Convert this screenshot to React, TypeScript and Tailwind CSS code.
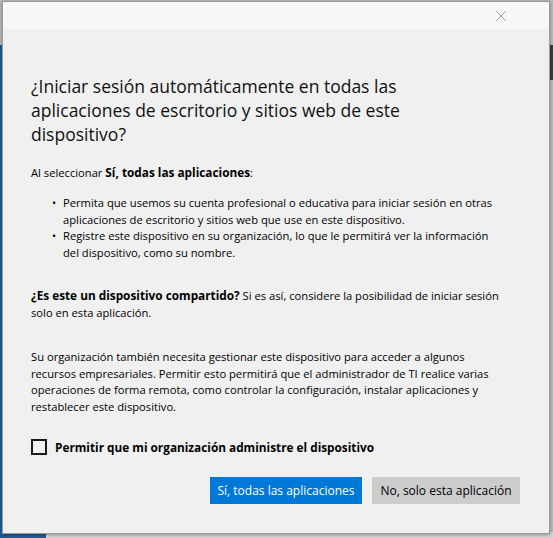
const titleLines = [
  "¿Iniciar sesión automáticamente en todas las",
  "aplicaciones de escritorio y sitios web de este",
  "dispositivo?",
];

const bullets = [
  [
    "Permita que usemos su cuenta profesional o educativa para iniciar sesión en otras",
    "aplicaciones de escritorio y sitios web que use en este dispositivo.",
  ],
  [
    "Registre este dispositivo en su organización, lo que le permitirá ver la información",
    "del dispositivo, como su nombre.",
  ],
];

const manageLines = [
  "Su organización también necesita gestionar este dispositivo para acceder a algunos",
  "recursos empresariales. Permitir esto permitirá que el administrador de TI realice varias",
  "operaciones de forma remota, como controlar la configuración, instalar aplicaciones y",
  "restablecer este dispositivo.",
];

function CloseIcon() {
  return (
    <svg width="10" height="10" viewBox="0 0 10 10" fill="none">
      <path d="M0.5 0.5L9.5 9.5M9.5 0.5L0.5 9.5" stroke="#999999" strokeWidth="1" />
    </svg>
  );
}

export default function App() {
  return (
    <div className="relative w-[553px] h-[538px] overflow-hidden bg-[#b9b9b9] font-['Open_Sans',sans-serif] text-black">
      {/* desktop behind the dialog */}
      <div className="absolute left-0 top-[45px] w-[46px] h-[493px] bg-[#1b5c9b]" />
      <div className="absolute right-0 top-[45px] w-[6px] h-[35px] bg-[#3b3b3b]" />
      <div className="absolute left-[46px] bottom-0 w-[507px] h-[6px] bg-[#d6d6d6]" />

      <div className="absolute left-[2px] top-[1px] w-[548px] h-[533px] flex flex-col border border-[#9c9c9c] bg-[#f0f0f0] shadow-[0_1px_3px_rgba(0,0,0,0.35)]">
        <div className="h-[27px] shrink-0 bg-[#f8f8f8] flex items-center justify-end pr-[43px]">
          <CloseIcon />
        </div>

        <div className="flex flex-col pl-[28px] pt-[45px]">
          <h1 className="text-[17.5px] leading-[24px] font-normal text-[#111]">
            {titleLines.map((line) => (
              <div key={line} className="whitespace-nowrap">
                {line}
              </div>
            ))}
          </h1>

          <p className="mt-[18px] text-[11.2px] leading-[17px] whitespace-nowrap">
            Al seleccionar <span className="font-bold text-[11.8px]">Sí, todas las aplicaciones</span>:
          </p>

          <ul className="mt-[14px] flex flex-col text-[11.2px] leading-[16.5px]">
            {bullets.map((item) => (
              <li key={item[0]} className="flex">
                <span className="w-[32px] shrink-0 pl-[21px]">•</span>
                <div>
                  {item.map((line) => (
                    <div key={line} className="whitespace-nowrap">
                      {line}
                    </div>
                  ))}
                </div>
              </li>
            ))}
          </ul>

          <div className="mt-[26px] text-[11.2px] leading-[16.5px]">
            <div className="whitespace-nowrap">
              <span className="font-bold text-[11.8px]">¿Es este un dispositivo compartido?</span> Si es así, considere la posibilidad de iniciar sesión
            </div>
            <div className="whitespace-nowrap">solo en esta aplicación.</div>
          </div>

          <div className="mt-[28px] text-[11.2px] leading-[16.5px]">
            {manageLines.map((line) => (
              <div key={line} className="whitespace-nowrap">
                {line}
              </div>
            ))}
          </div>

          <label className="mt-[24px] flex items-center gap-[8px]">
            <span className="w-[16px] h-[16px] border-2 border-[#1a1a1a] bg-transparent" />
            <span className="text-[11.8px] font-bold leading-[16px] whitespace-nowrap">
              Permitir que mi organización administre el dispositivo
            </span>
          </label>

          <div className="mt-[22px] flex justify-end gap-[10px] pr-[29px]">
            <button className="h-[27px] w-[152px] bg-[#0078d7] text-white text-[12px] whitespace-nowrap">
              Sí, todas las aplicaciones
            </button>
            <button className="h-[27px] w-[148px] bg-[#cccccc] text-black text-[12px] whitespace-nowrap">
              No, solo esta aplicación
            </button>
          </div>
        </div>
      </div>
    </div>
  );
}
